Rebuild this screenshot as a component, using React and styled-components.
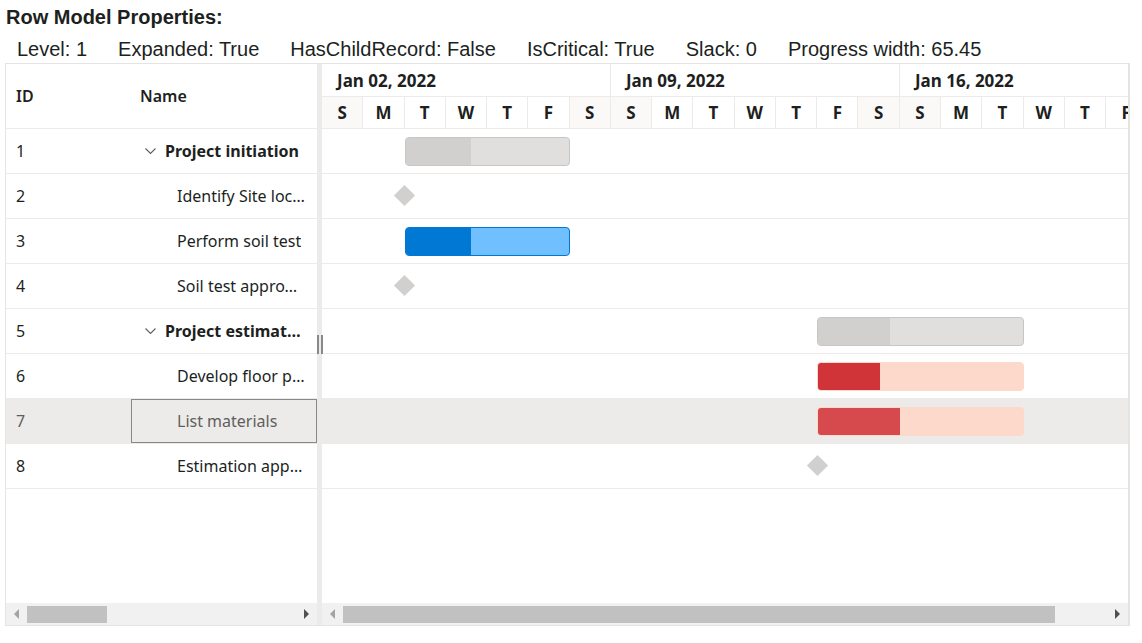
import styled, { createGlobalStyle } from 'styled-components';

const GlobalStyle = createGlobalStyle`
    body {
        margin: 0;
        background: #ffffff;
    }
`;

const CELL = 41.28;
const DAYS = ['S', 'M', 'T', 'W', 'T', 'F', 'S'];
const WEEKS = ['Jan 02, 2022', 'Jan 09, 2022', 'Jan 16, 2022'];

const rows = [
    { id: 1, name: 'Project initiation', parent: true, kind: 'parent', start: 2, end: 6, progress: 40 },
    { id: 2, name: 'Identify Site location', kind: 'milestone', start: 2 },
    { id: 3, name: 'Perform soil test', kind: 'normal', start: 2, end: 6, progress: 40 },
    { id: 4, name: 'Soil test approval', kind: 'milestone', start: 2 },
    { id: 5, name: 'Project estimation', parent: true, kind: 'parent', start: 12, end: 17, progress: 35 },
    { id: 6, name: 'Develop floor plan for estimation', kind: 'critical', start: 12, end: 17, progress: 30 },
    { id: 7, name: 'List materials', kind: 'critical', start: 12, end: 17, progress: 40, selected: true },
    { id: 8, name: 'Estimation approval', kind: 'milestone', start: 12 },
];

const barColors = {
    parent: { bg: '#e1dfdd', fill: '#d2d0ce', border: '#c8c6c4' },
    normal: { bg: '#70c0ff', fill: '#0078d4', border: '#0078d4' },
    critical: { bg: '#fdd9cc', fill: '#d13438', border: '#fdd9cc' },
};

const Page = styled.div`
    padding: 6px 0 0 5px;
    font-family: "Liberation Sans", Arial, sans-serif;
    color: #201f1e;
`;

const Title = styled.div`
    font-size: 20px;
    font-weight: bold;
    line-height: 23px;
    padding-left: 1px;
`;

const PropsRow = styled.div`
    display: flex;
    gap: 31px;
    margin-top: 9px;
    padding-left: 12px;
    font-size: 20px;
    line-height: 23px;
`;

const Gantt = styled.div`
    margin-top: 2px;
    width: 1125px;
    height: 563px;
    box-sizing: border-box;
    border: 1px solid #e6e4e2;
    border-right-width: 2px;
    display: flex;
    font-family: "Segoe UI", "Noto Sans", "Open Sans", sans-serif;
    color: #201f1e;
`;

const Pane = styled.div`
    width: ${p => p.$width};
    flex: ${p => p.$grow ? 1 : 'none'};
    display: flex;
    flex-direction: column;
    overflow: hidden;
    min-width: 0;
`;

const GridHeader = styled.div`
    height: 65px;
    box-sizing: border-box;
    border-bottom: 1px solid #edebe9;
    display: flex;
    align-items: center;
    font-size: 16px;
    font-weight: 600;
`;

const HeadCell = styled.div`
    width: ${p => p.$width}px;
    padding-left: 10px;
    box-sizing: border-box;
`;

const Body = styled.div`
    flex: 1;
    overflow: hidden;
`;

const Row = styled.div`
    height: 45px;
    box-sizing: border-box;
    border-bottom: 1px solid #edebe9;
    display: flex;
    align-items: stretch;
    background: ${p => p.$selected ? '#edebe9' : 'transparent'};
    color: ${p => p.$selected ? '#605e5c' : '#201f1e'};
    position: relative;
`;

const IdCell = styled.div`
    width: 124px;
    padding-left: 10px;
    box-sizing: border-box;
    display: flex;
    align-items: center;
    font-size: 16px;
`;

const NameCell = styled.div`
    flex: 1;
    min-width: 0;
    display: flex;
    align-items: center;
    box-sizing: border-box;
    padding: 0 11px 0 ${p => p.$parent ? 13 : 45}px;
    margin-left: 1px;
    border: 1px solid ${p => p.$focused ? '#8a8886' : 'transparent'};
    font-size: 16px;
    font-weight: ${p => p.$parent ? 700 : 400};
`;

const Chevron = styled.svg`
    width: 11px;
    height: 7px;
    margin-right: 9px;
    flex: none;
`;

const NameText = styled.span`
    white-space: nowrap;
    overflow: hidden;
    text-overflow: ellipsis;
`;

const Splitter = styled.div`
    width: 5px;
    flex: none;
    background: #edebe9;
    padding-top: 271px;
    box-sizing: border-box;
    position: relative;
    z-index: 1;
`;

const Handle = styled.div`
    width: 6px;
    height: 19px;
    box-sizing: border-box;
    border-left: 2px solid #8a8886;
    border-right: 2px solid #8a8886;
`;

const Tier = styled.div`
    display: flex;
    height: ${p => p.$height}px;
    box-sizing: border-box;
    border-bottom: 1px solid #edebe9;
    flex: none;
`;

const WeekCell = styled.div`
    width: ${CELL * 7}px;
    flex: none;
    box-sizing: border-box;
    border-right: 1px solid #edebe9;
    padding-left: 15px;
    display: flex;
    align-items: center;
    font-size: 17px;
    font-weight: 700;
`;

const DayCell = styled.div`
    width: ${CELL}px;
    flex: none;
    box-sizing: border-box;
    border-right: 1px solid #edebe9;
    display: flex;
    align-items: center;
    justify-content: center;
    font-size: 17px;
    font-weight: 700;
    background: ${p => p.$weekend ? '#faf9f8' : '#ffffff'};
`;

const ChartRow = styled(Row)`
    width: ${CELL * 21}px;
`;

const Bar = styled.div`
    position: absolute;
    top: 8px;
    height: 29px;
    box-sizing: border-box;
    border-radius: 4px;
    border: 1px solid ${p => p.$c.border};
    background: ${p => p.$c.bg};
    overflow: hidden;
`;

const Progress = styled.div`
    height: 100%;
    background: ${p => p.$color};
`;

const Milestone = styled.div`
    position: absolute;
    top: 14px;
    width: 15px;
    height: 15px;
    background: #d2d0ce;
    transform: rotate(45deg);
`;

const ScrollTrack = styled.div`
    height: 22px;
    flex: none;
    display: flex;
    align-items: center;
    background: #f1f1f1;
`;

const Arrow = styled.div`
    width: 21px;
    height: 100%;
    flex: none;
    display: flex;
    align-items: center;
    justify-content: center;

    &::before {
        content: '';
        border-top: 5px solid transparent;
        border-bottom: 5px solid transparent;
        ${p => p.$dir === 'left'
            ? 'border-right: 5px solid #a3a3a3;'
            : 'border-left: 5px solid #505050;'}
    }
`;

const Thumb = styled.div`
    width: ${p => p.$width}px;
    height: 17px;
    flex: none;
    background: #c1c1c1;
`;

const Spacer = styled.div`
    flex: 1;
`;

function Scrollbar({ thumb }) {
    return (
        <ScrollTrack>
            <Arrow $dir="left" />
            <Thumb $width={thumb} />
            <Spacer />
            <Arrow $dir="right" />
        </ScrollTrack>
    );
}

function TaskBar({ row }) {
    if (row.kind === 'milestone') {
        return <Milestone style={{ left: row.start * CELL - 7.5 }} />;
    }
    const c = barColors[row.kind];
    const fill = row.selected ? '#d64a4e' : c.fill;
    return (
        <Bar $c={c} style={{ left: row.start * CELL, width: (row.end - row.start) * CELL }}>
            <Progress $color={fill} style={{ width: row.progress + '%' }} />
        </Bar>
    );
}

export default function App() {
    const days = Array.from({ length: 21 }, (_, i) => i);

    return (
        <>
            <GlobalStyle />
            <Page>
                <Title>Row Model Properties:</Title>
                <PropsRow>
                    <span>Level: 1</span>
                    <span>Expanded: True</span>
                    <span>HasChildRecord: False</span>
                    <span>IsCritical: True</span>
                    <span>Slack: 0</span>
                    <span>Progress width: 65.45</span>
                </PropsRow>

                <Gantt>
                    <Pane $width="311px">
                        <GridHeader>
                            <HeadCell $width={124}>ID</HeadCell>
                            <HeadCell $width={187}>Name</HeadCell>
                        </GridHeader>
                        <Body>
                            {rows.map(r => (
                                <Row key={r.id} $selected={r.selected}>
                                    <IdCell>{r.id}</IdCell>
                                    <NameCell $parent={r.parent} $focused={r.selected}>
                                        {r.parent && (
                                            <Chevron viewBox="0 0 11 7">
                                                <polyline points="0.5,0.5 5.5,5.5 10.5,0.5" fill="none" stroke="#605e5c" strokeWidth="1.1" />
                                            </Chevron>
                                        )}
                                        <NameText>{r.name}</NameText>
                                    </NameCell>
                                </Row>
                            ))}
                        </Body>
                        <Scrollbar thumb={80} />
                    </Pane>

                    <Splitter>
                        <Handle />
                    </Splitter>

                    <Pane $grow>
                        <Tier $height={33}>
                            {WEEKS.map(w => <WeekCell key={w}>{w}</WeekCell>)}
                        </Tier>
                        <Tier $height={32}>
                            {days.map(d => (
                                <DayCell key={d} $weekend={d % 7 === 0 || d % 7 === 6}>{DAYS[d % 7]}</DayCell>
                            ))}
                        </Tier>
                        <Body>
                            {rows.map(r => (
                                <ChartRow key={r.id} $selected={r.selected}>
                                    <TaskBar row={r} />
                                </ChartRow>
                            ))}
                        </Body>
                        <Scrollbar thumb={712} />
                    </Pane>
                </Gantt>
            </Page>
        </>
    );
}
